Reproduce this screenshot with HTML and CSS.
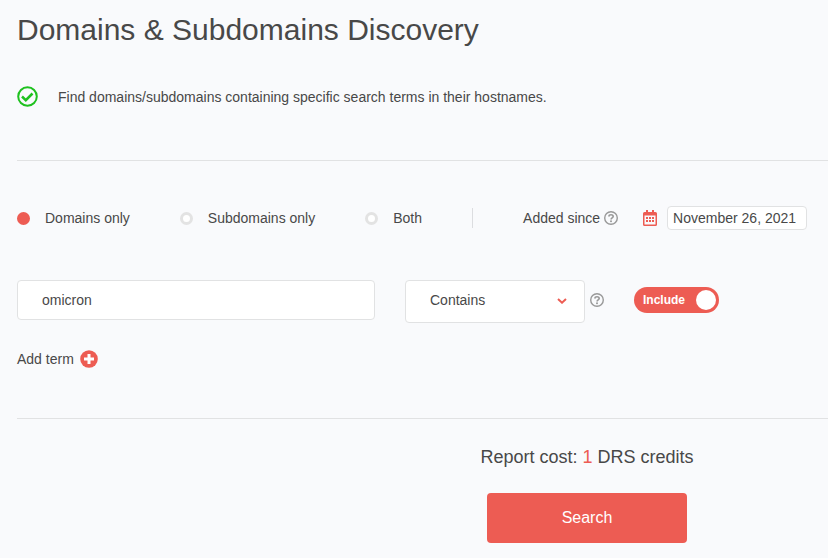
FILE: index.html
```html
<!DOCTYPE html>
<html lang="en">
<head>
    <meta charset="UTF-8">
    <meta name="viewport" content="width=device-width, initial-scale=1.0">
    <title>Domains &amp; Subdomains Discovery</title>
    <link rel="stylesheet" href="styles.css">
</head>
<body>
    <main class="page">
        <h1 class="title">Domains &amp; Subdomains Discovery</h1>
        <p class="intro">
            <svg class="intro-icon" viewBox="0 0 21 21" aria-hidden="true">
                <circle cx="10.500" cy="10.500" r="9.300" fill="none" stroke="#1fc11f" stroke-width="2"/>
                <path d="M5 10.500l3.800 3.700 6.700-6.700" fill="none" stroke="#1fc11f" stroke-width="2.500"/>
            </svg>
            <span>Find domains/subdomains containing specific search terms in their hostnames.</span>
        </p>

        <form class="search-form">
            <!-- search type and date -->
            <div class="options">
                <label class="radio"><input type="radio" name="type" value="domains" checked>Domains only</label>
                <label class="radio"><input type="radio" name="type" value="subdomains">Subdomains only</label>
                <label class="radio"><input type="radio" name="type" value="both">Both</label>
                <div class="since">
                    <label for="since">Added since</label>
                    <button type="button" class="help" aria-label="About the date">
                        <svg viewBox="0 0 14 14">
                            <circle cx="7" cy="7" r="6.3" fill="none" stroke="#999" stroke-width="1.4"/>
                            <path d="M4.700 5.500c.2-1.200 1.100-1.800 2.300-1.800s2.200.7 2.200 1.800c0 1.500-2.100 1.400-2.100 2.900" fill="none" stroke="#999" stroke-width="1.6"/>
                            <circle cx="7" cy="10.300" r="1" fill="#999"/>
                        </svg>
                    </button>
                    <svg class="calendar" viewBox="0 0 14 16" aria-hidden="true">
                        <path d="M3 0h2v2h4V0h2v2h1.500A1.500 1.500 0 0 1 14 3.500v11a1.500 1.500 0 0 1-1.500 1.500h-11A1.500 1.500 0 0 1 0 14.500v-11A1.500 1.500 0 0 1 1.500 2H3zM1.500 5.500v9h11v-9z" fill="#ed5c53" fill-rule="evenodd"/>
                        <path d="M3 7h2v2H3zM6 7h2v2H6zM9 7h2v2H9zM3 10h2v2H3zM6 10h2v2H6zM9 10h2v2H9z" fill="#ed5c53"/>
                    </svg>
                    <input type="text" id="since" class="date" value="November 26, 2021">
                </div>
            </div>

            <!-- search term -->
            <div class="term">
                <input type="text" class="term-input" value="omicron" aria-label="Search term">
                <div class="match">
                    <select class="match-select" aria-label="Match type">
                        <option>Contains</option>
                        <option>Starts with</option>
                        <option>Ends with</option>
                    </select>
                    <svg class="arrow" viewBox="0 0 10 6" aria-hidden="true">
                        <path d="M1 1l4 3.700L9 1" fill="none" stroke="#ed5c53" stroke-width="2"/>
                    </svg>
                </div>
                <button type="button" class="help" aria-label="About the match type">
                    <svg viewBox="0 0 14 14">
                        <circle cx="7" cy="7" r="6.3" fill="none" stroke="#999" stroke-width="1.4"/>
                        <path d="M4.700 5.500c.2-1.200 1.100-1.800 2.300-1.800s2.200.7 2.200 1.800c0 1.500-2.100 1.400-2.100 2.900" fill="none" stroke="#999" stroke-width="1.6"/>
                        <circle cx="7" cy="10.300" r="1" fill="#999"/>
                    </svg>
                </button>
                <label class="toggle">
                    <input type="checkbox" checked>
                    <span>Include</span>
                </label>
            </div>

            <button type="button" class="add">
                Add term
                <svg viewBox="0 0 18 18" aria-hidden="true">
                    <circle cx="9" cy="9" r="8.8" fill="#ed5c53"/>
                    <path d="M9 4v10M4 9h10" stroke="#fff" stroke-width="3"/>
                </svg>
            </button>

            <div class="submit">
                <p class="cost">Report cost: <span class="credits">1</span> DRS credits</p>
                <button type="submit" class="submit-btn">Search</button>
            </div>
        </form>
    </main>
</body>
</html>
```

FILE: styles.css
```css
* {
    box-sizing: border-box;
}
body {
    margin: 0;
    background: #f9fafc;
    color: #484848;
    font-family: Arial, "Liberation Sans", sans-serif;
    font-size: 14px;
    line-height: 20px;
}
input, select, button {
    margin: 0;
    color: inherit;
    font: inherit;
}
button {
    padding: 0;
    border: none;
    background: none;
    cursor: pointer;
}
svg {
    display: block;
    flex: none;
}
.page {
    padding: 10px 0 0 17px;
}
.title {
    margin: 0;
    font-size: 30px;
    font-weight: normal;
    line-height: 40px;
}
.intro {
    display: flex;
    align-items: center;
    gap: 20px;
    margin: 36px 0 53px;
}
.intro-icon {
    width: 21px;
    height: 21px;
}
.search-form {
    border-top: 1px solid #e1e2e3;
    padding-top: 45px;
}

.options {
    display: flex;
    align-items: center;
    gap: 50px;
    white-space: nowrap;
}
.radio {
    display: flex;
    align-items: center;
    gap: 15px;
    cursor: pointer;
}
.radio input {
    appearance: none;
    width: 13px;
    height: 13px;
    border: 3px solid #e3e3e3;
    border-radius: 50%;
    background: #fff;
}
.radio input:checked {
    border-color: #ed5c53;
    background: #ed5c53;
}
.since {
    display: flex;
    align-items: center;
}
.since::before {
    content: "";
    width: 1px;
    height: 20px;
    margin-right: 50px;
    background: #dcdde0;
}
.help {
    flex: none;
    width: 14px;
    height: 14px;
}
.since .help {
    margin-left: 4px;
}
.calendar {
    width: 14px;
    height: 16px;
    margin: 0 10px 0 25px;
}
.date {
    width: 140px;
    height: 24px;
    padding: 0 5px;
    border: 1px solid #e1e2e3;
    border-radius: 4px;
    background: #fff;
}

.term {
    display: flex;
    align-items: flex-start;
    margin-top: 50px;
}
.term-input {
    flex: 0 1 358px;
    min-width: 0;
    height: 40px;
    margin-right: 30px;
    padding: 0 24px;
    border: 1px solid #e1e2e3;
    border-radius: 4px;
    background: #fff;
}
.match {
    position: relative;
    flex: none;
    width: 180px;
}
.match-select {
    display: block;
    appearance: none;
    width: 100%;
    height: 43px;
    padding: 0 24px 3px;
    border: 1px solid #e1e2e3;
    border-radius: 4px;
    background: #fff;
}
.arrow {
    position: absolute;
    top: 18px;
    right: 18px;
    width: 10px;
    height: 6px;
    pointer-events: none;
}
.term .help {
    margin: 13px 0 0 5px;
}
.toggle {
    position: relative;
    display: flex;
    align-items: center;
    width: 85px;
    height: 26px;
    margin: 7px 0 0 30px;
    padding-left: 9px;
    border-radius: 13px;
    background: #ed5c53;
    color: #fff;
    font-size: 12px;
    font-weight: bold;
    cursor: pointer;
}
.toggle input {
    position: absolute;
    top: 3px;
    right: 3px;
    appearance: none;
    width: 20px;
    height: 20px;
    border-radius: 50%;
    background: #fff;
}

.add {
    display: flex;
    align-items: center;
    gap: 6px;
    margin: 26px 0 49px;
}
.add svg {
    width: 18px;
    height: 18px;
}

.submit {
    padding: 26px 0 15px 329px;
    border-top: 1px solid #e1e2e3;
    text-align: center;
}
.cost {
    margin: 0 0 24px;
    font-size: 18px;
    line-height: 24px;
}
.credits {
    color: #ed5c53;
}
.submit-btn {
    width: 200px;
    height: 50px;
    border-radius: 4px;
    background: #ed5c53;
    color: #fff;
    font-size: 16px;
}
```
